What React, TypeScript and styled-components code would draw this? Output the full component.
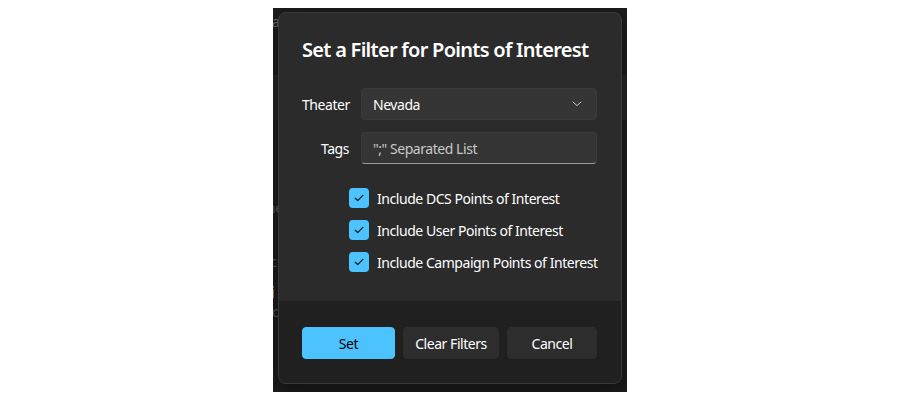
import React from "react";
import styled, { createGlobalStyle } from "styled-components";

const Global = createGlobalStyle`
  html, body { margin: 0; padding: 0; background: #ffffff; }
  body { font-family: "Segoe UI", "Noto Sans", "Open Sans", sans-serif; letter-spacing: -0.45px; }
`;

const Page = styled.div`
  width: 900px;
  height: 400px;
  display: flex;
  justify-content: center;
  padding-top: 8px;
  box-sizing: border-box;
`;

const Backdrop = styled.div`
  position: relative;
  width: 354px;
  height: 384px;
  background: #1c1c1c;
  overflow: hidden;
  display: flex;
  flex-direction: column;
`;

const BgLine = styled.div<{ $top: number; $color: string; $size?: number }>`
  margin-top: ${(p) => p.$top}px;
  margin-left: -6px;
  font-size: ${(p) => p.$size ?? 14}px;
  line-height: 16px;
  color: ${(p) => p.$color};
  white-space: nowrap;
`;

const BgBand = styled.div`
  margin-top: 45px;
  height: 45px;
  background: #242424;
`;

const Dialog = styled.div`
  position: absolute;
  left: 5px;
  top: 4px;
  width: 344px;
  height: 372px;
  box-sizing: border-box;
  border: 1px solid #3a3a3a;
  border-radius: 8px;
  overflow: hidden;
  display: flex;
  flex-direction: column;
  background: #2b2b2b;
  box-shadow: 0 8px 24px rgba(0, 0, 0, 0.4);
`;

const Body = styled.div`
  flex: 1;
  padding: 23px 24px 0 23px;
  display: flex;
  flex-direction: column;
`;

const Title = styled.h1`
  margin: 0;
  font-size: 20px;
  line-height: 28px;
  font-weight: 600;
  letter-spacing: -0.72px;
  color: #ffffff;
  white-space: nowrap;
`;

const Form = styled.div`
  margin-top: 24px;
  display: grid;
  grid-template-columns: 47px 236px;
  column-gap: 12px;
  row-gap: 12px;
  align-items: center;
`;

const Label = styled.label`
  font-size: 14px;
  color: #ffffff;
  text-align: right;
  white-space: nowrap;
`;

const Field = styled.div<{ $underline?: boolean }>`
  height: 32px;
  box-sizing: border-box;
  border-radius: 4px;
  background: #353535;
  border: 1px solid #3a3a3a;
  border-bottom-color: ${(p) => (p.$underline ? "#9a9a9a" : "#3a3a3a")};
  display: flex;
  align-items: center;
  justify-content: space-between;
  padding: 0 14px 0 11px;
  font-size: 14px;
  color: ${(p) => (p.$underline ? "#c8c8c8" : "#ffffff")};
`;

const Checks = styled.div`
  margin-top: 18px;
  padding-left: 47px;
  display: flex;
  flex-direction: column;
`;

const CheckRow = styled.div`
  height: 32px;
  display: flex;
  align-items: center;
  gap: 8px;
  font-size: 14px;
  color: #ffffff;
  white-space: nowrap;
`;

const Box = styled.span`
  flex: 0 0 20px;
  width: 20px;
  height: 20px;
  border-radius: 4px;
  background: #4cc2ff;
  display: flex;
  align-items: center;
  justify-content: center;
`;

const Footer = styled.div`
  height: 82px;
  box-sizing: border-box;
  background: #202020;
  padding: 26px 23px 0 23px;
  display: grid;
  grid-template-columns: 93px 96px 90px;
  column-gap: 8px;
  align-content: start;
`;

const Button = styled.button<{ $primary?: boolean }>`
  height: 32px;
  border-radius: 4px;
  border: 1px solid ${(p) => (p.$primary ? "#4cc2ff" : "#2d2d2d")};
  background: ${(p) => (p.$primary ? "#4cc2ff" : "#2d2d2d")};
  color: ${(p) => (p.$primary ? "#000000" : "#ffffff")};
  font-family: inherit;
  letter-spacing: inherit;
  font-size: 14px;
  padding: 0;
  cursor: pointer;
`;

const Check = () => (
  <svg width="12" height="12" viewBox="0 0 12 12" fill="none">
    <path d="M2.2 6.2 L4.8 8.6 L9.8 3.4" stroke="#1a1a1a" strokeWidth="1.3" strokeLinecap="round" strokeLinejoin="round" />
  </svg>
);

const Chevron = () => (
  <svg width="10" height="6" viewBox="0 0 10 6" fill="none">
    <path d="M1 1 L5 4.6 L9 1" stroke="#c8c8c8" strokeWidth="1" strokeLinecap="round" strokeLinejoin="round" />
  </svg>
);

export default function App() {
  const checks = [
    "Include DCS Points of Interest",
    "Include User Points of Interest",
    "Include Campaign Points of Interest",
  ];
  return (
    <>
      <Global />
      <Page>
        <Backdrop>
          <BgLine $top={6} $color="#6a6a6a">ra</BgLine>
          <BgBand />
          <BgLine $top={80} $color="#555555">ne</BgLine>
          <BgLine $top={38} $color="#555555">ic</BgLine>
          <BgLine $top={14} $color="#a0a0a0" $size={16}>li</BgLine>
          <BgLine $top={4} $color="#555555">rc</BgLine>
          <Dialog>
            <Body>
              <Title>Set a Filter for Points of Interest</Title>
              <Form>
                <Label>Theater</Label>
                <Field>
                  <span>Nevada</span>
                  <Chevron />
                </Field>
                <Label>Tags</Label>
                <Field $underline>
                  <span>";" Separated List</span>
                </Field>
              </Form>
              <Checks>
                {checks.map((c) => (
                  <CheckRow key={c}>
                    <Box>
                      <Check />
                    </Box>
                    {c}
                  </CheckRow>
                ))}
              </Checks>
            </Body>
            <Footer>
              <Button $primary>Set</Button>
              <Button>Clear Filters</Button>
              <Button>Cancel</Button>
            </Footer>
          </Dialog>
        </Backdrop>
      </Page>
    </>
  );
}
